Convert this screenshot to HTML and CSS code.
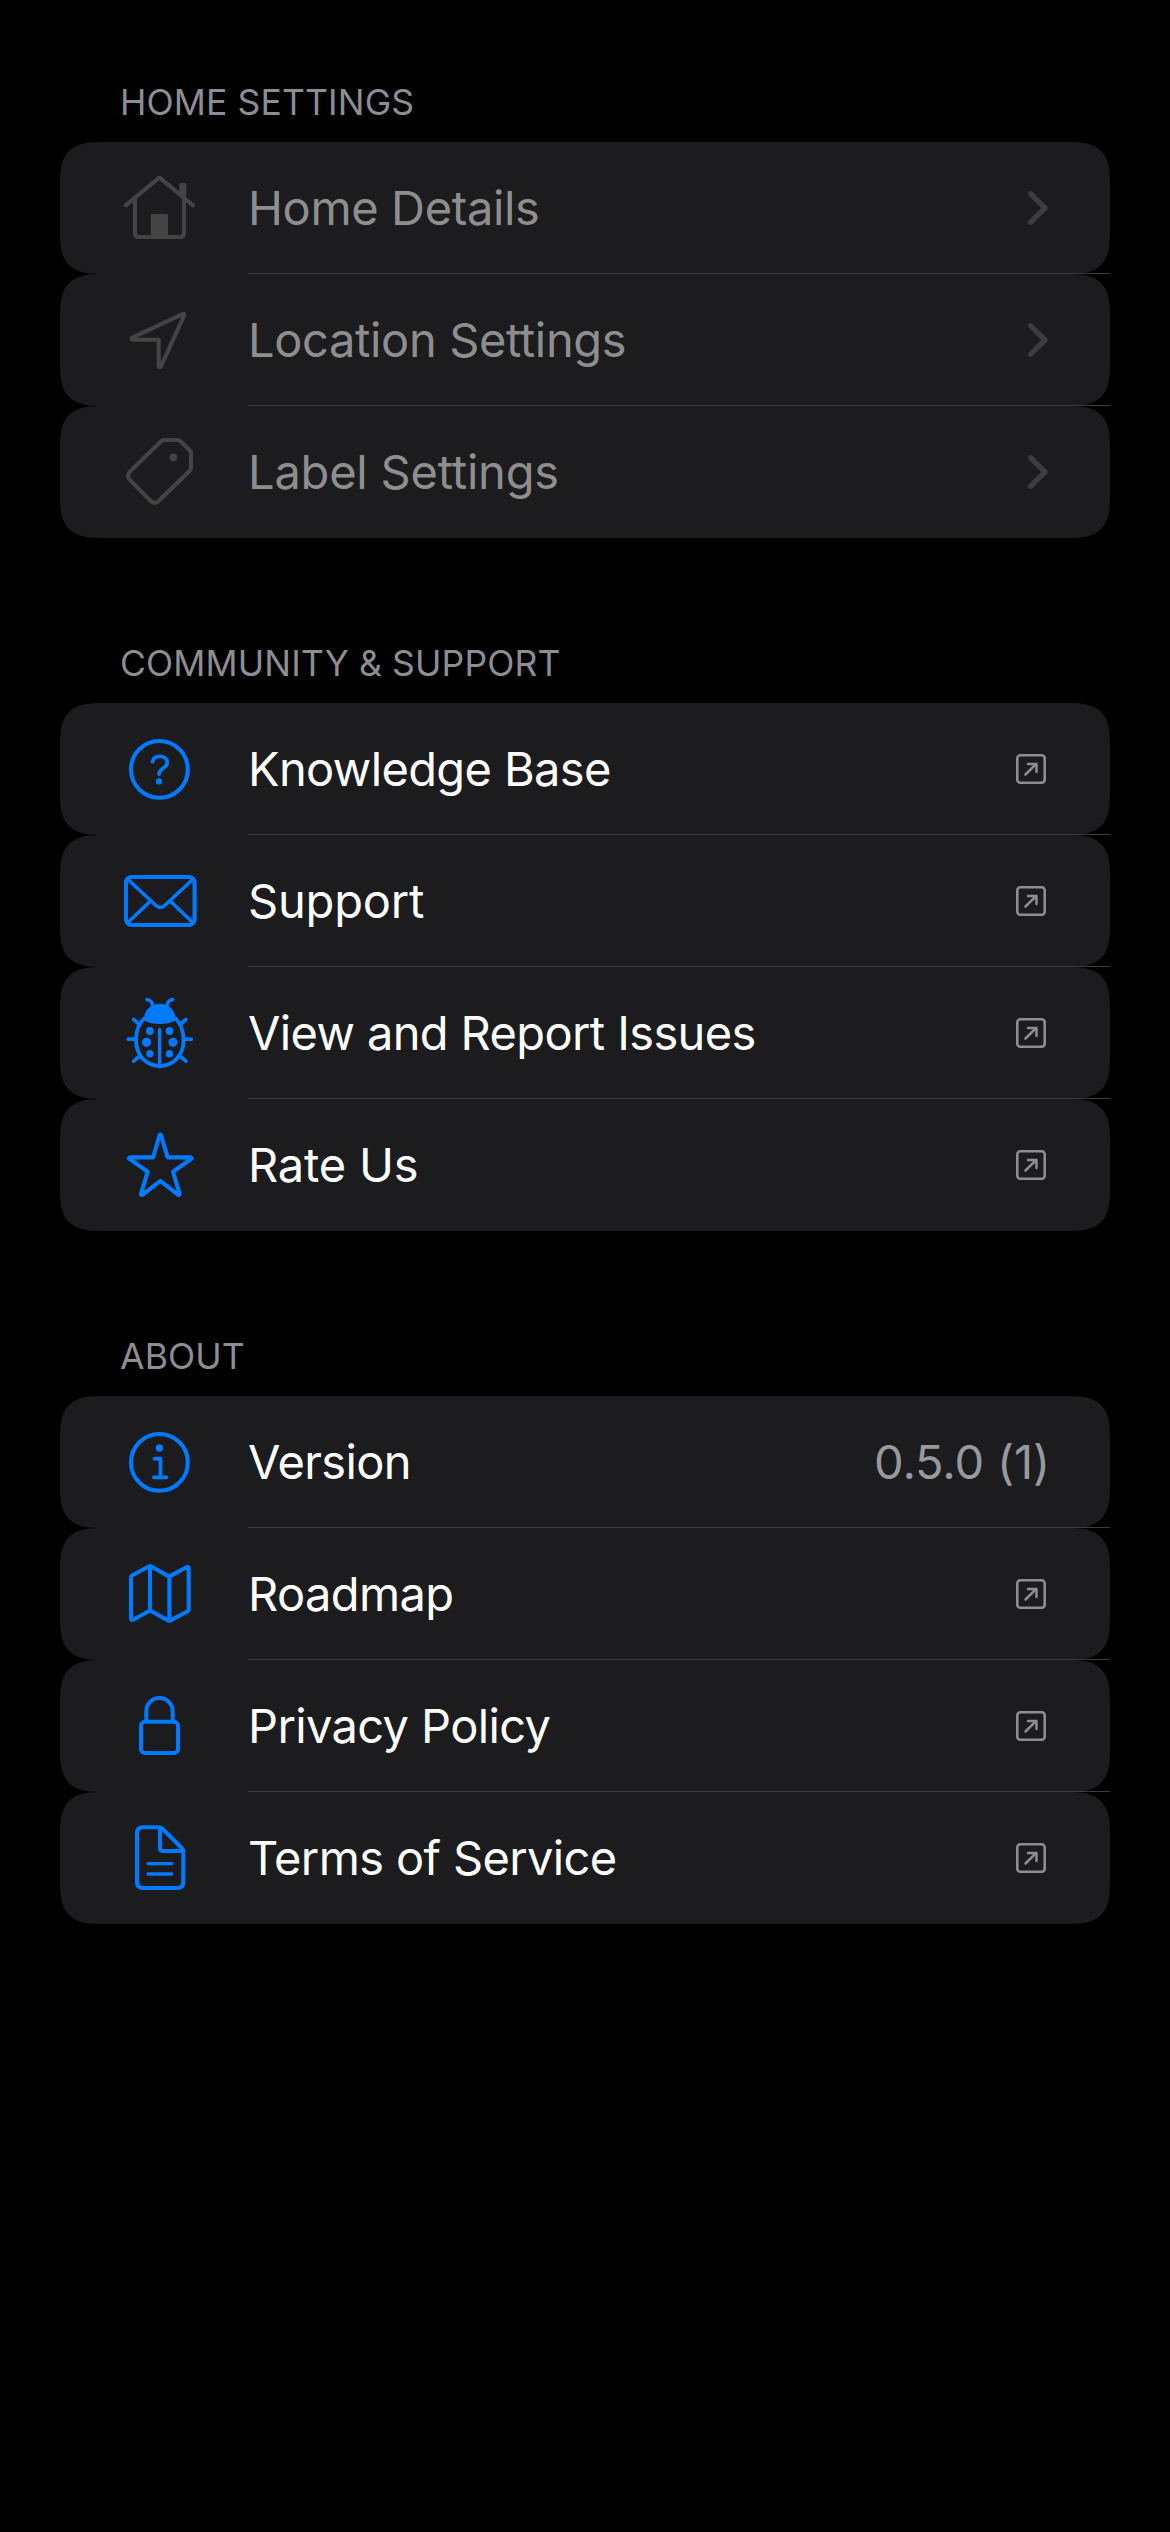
FILE: index.html
```html
<!DOCTYPE html>
<html lang="en">
<head>
<meta charset="utf-8">
<title>Settings</title>
<link rel="stylesheet" href="styles.css">
</head>
<body>
<svg class="defs" aria-hidden="true">
  <symbol id="chevron" viewBox="0 0 22 36"><path d="M4.700 3.800 19 18 4.700 32.200" stroke-width="5.400"/></symbol>
  <symbol id="external" viewBox="0 0 30 30"><rect x="1.300" y="1.300" width="27.400" height="27.400" rx="3" stroke-width="2.600"/><path d="M9.500 20.500 20.300 9.800M12 10h8.500v8" stroke-width="2.500"/></symbol>
</svg>
<main class="settings">
  <section class="section">
    <h2 class="section-title">HOME SETTINGS</h2>
    <ul class="list list-disabled">
      <li class="row">
        <svg class="icon" viewBox="0 0 100 132"><path d="M15.7 63.3 48 36.6q1.4-1.2 2.8 0L83 63.3M25 56v35q0 4 4 4h41q4 0 4-4V56"/><path class="solid" d="M40.7 97V73.2q0-1.2 1.2-1.2h14.9q1.2 0 1.2 1.2V97zM69.3 53V42.5q0-1.5 1.5-1.5h4q1.5 0 1.5 1.5V59z"/></svg>
        <span class="label">Home Details</span>
        <svg class="chevron"><use href="#chevron"/></svg>
      </li>
      <li class="row">
        <svg class="icon" viewBox="0 0 100 132"><path d="M22.2 63.6 72.6 40.1q2.6-1 1.6 1.6L50.8 92.6q-1.6 1.6-2.1-.6V65.7H22.6q-2-.8-.4-2.1z"/></svg>
        <span class="label">Location Settings</span>
        <svg class="chevron"><use href="#chevron"/></svg>
      </li>
      <li class="row">
        <svg class="icon" viewBox="0 0 100 132"><path d="M54 34h13.6q1.8 0 3 1.2l9.1 9.1q1.3 1.3 1.3 3v14.4q0 1.8-1.3 3L48.5 95.3q-3.8 3.2-7.6 0L19.6 73.6q-3.2-3.8 0-7.6L51 35.2q1.2-1.2 3-1.2z"/><circle class="solid" cx="63.4" cy="51.4" r="3.8"/></svg>
        <span class="label label-loose">Label Settings</span>
        <svg class="chevron"><use href="#chevron"/></svg>
      </li>
    </ul>
  </section>

  <section class="section">
    <h2 class="section-title">COMMUNITY &amp; SUPPORT</h2>
    <ul class="list">
      <li class="row">
        <svg class="icon" viewBox="0 0 100 132"><circle cx="49.4" cy="66.4" r="28.4"/><path d="M42.5 58.7c.6-3.6 3.2-5.4 7.3-5.4s7.5 2.4 7.5 6.1c0 5.600-8.200 6-8.200 11.600" stroke-width="3.8"/><circle class="solid" cx="49" cy="78.4" r="3.1"/></svg>
        <span class="label">Knowledge Base</span>
        <svg class="external"><use href="#external"/></svg>
      </li>
      <li class="row">
        <svg class="icon" viewBox="0 0 100 132"><rect x="16" y="42" width="68.6" height="48" rx="5.5"/><path d="m17.5 44 28.7 26.7q4.1 3.6 8.2 0L83.2 44M17.5 88l23.2-22.3M83.2 88 60 65.7" stroke-width="3.6"/></svg>
        <span class="label label-loose">Support</span>
        <svg class="external"><use href="#external"/></svg>
      </li>
      <li class="row">
        <svg class="icon" viewBox="0 0 100 132"><path d="M34 51.5c-5 5-8 13-8 21.5C26 88 36 99 49.8 99s23.8-11 23.8-26c0-8.500-3-16.500-8-21.500" stroke-width="3.8"/><path class="solid" d="M34 53.500C33.500 43 41 36.700 49.800 36.700S66 43 65.600 53.500C61 56 56 57 49.800 57S38.500 56 34 53.500z"/><path d="M37 32.500q5 1 5.500 5.500M62.600 32.500q-5 1-5.500 5.500M23.700 52.500l6 5.200M75.900 52.500l-6 5.200M18.300 72.200H26M81.300 72.200h-7.700M23.700 94.200l6-5.200M75.900 94.200l-6-5.200" stroke-width="3.700"/><path d="M49.600 62.500V97" stroke-width="3.400"/><g class="solid"><circle cx="39.900" cy="64" r="3.900"/><circle cx="36.500" cy="75.300" r="4.600"/><circle cx="39.900" cy="86.700" r="3.700"/><circle cx="59.500" cy="64" r="3.900"/><circle cx="63" cy="75.300" r="4.600"/><circle cx="59.500" cy="86.700" r="3.700"/></g></svg>
        <span class="label">View and Report Issues</span>
        <svg class="external"><use href="#external"/></svg>
      </li>
      <li class="row">
        <svg class="icon" viewBox="0 0 100 132"><path d="M49.500 36.200q.8-1.600 1.600 0L57.600 58.400H80.800q1.800.4.500 1.500L63 72.700 69.600 94.700q0 1.800-1.400 1.100L50.300 81.800 32.400 95.800q-1.400.7-1.400-1.100L37.800 72.700 19.400 59.900q-1.300-1.100.5-1.500H43.100z"/></svg>
        <span class="label label-loose">Rate Us</span>
        <svg class="external"><use href="#external"/></svg>
      </li>
    </ul>
  </section>

  <section class="section">
    <h2 class="section-title">ABOUT</h2>
    <ul class="list">
      <li class="row">
        <svg class="icon" viewBox="0 0 100 132"><circle cx="49.4" cy="66.4" r="28.4"/><circle class="solid" cx="49.400" cy="52" r="3.700"/><path d="M44.500 62.700h6v18.600M43.800 81.300h12.700" stroke-width="3.700"/></svg>
        <span class="label">Version</span>
        <span class="value">0.5.0 (1)</span>
      </li>
      <li class="row">
        <svg class="icon" viewBox="0 0 100 132"><path d="M22 47.500 38.700 38.500q1.300-.7 2.600 0L58 47.900q1.300.8 2.600 0L76.500 39.200q2.200-1 2.200 1.300V81.500q0 1.100-1 1.700L60.600 92.400q-1.300.8-2.600 0L41.300 83.300q-1.300-.7-2.600 0L23.200 91.700Q21 92.700 21 90.400V49.200q0-1.100 1-1.700zM40 38v45M59.400 48.500v44.500"/></svg>
        <span class="label">Roadmap</span>
        <svg class="external"><use href="#external"/></svg>
      </li>
      <li class="row">
        <svg class="icon" viewBox="0 0 100 132"><rect x="31" y="61.700" width="37" height="31.300" rx="4"/><path d="M36.300 61V51.200a13.200 13.200 0 0 1 26.400 0V61"/></svg>
        <span class="label">Privacy Policy</span>
        <svg class="external"><use href="#external"/></svg>
      </li>
      <li class="row">
        <svg class="icon" viewBox="0 0 100 132"><path d="M33 35.300H49q2 0 3.500 1.500L71.800 56q1.500 1.500 1.500 3.500V90q0 6-6 6H33q-6 0-6-6V41.300q0-6 6-6zM50 36V56q0 3 3 3H72.500"/><path d="M38 71.600H61.800M38 82H61.800" stroke-width="3.300"/></svg>
        <span class="label">Terms of Service</span>
        <svg class="external"><use href="#external"/></svg>
      </li>
    </ul>
  </section>
</main>
</body>
</html>
```
FILE: styles.css
```css
* {
  box-sizing: border-box;
}

body {
  margin: 0;
  min-height: 2532px;
  background: #000;
  color: #fff;
  font-family: Inter, "Liberation Sans", sans-serif;
}

.defs {
  display: none;
}

.settings {
  display: flex;
  flex-direction: column;
  gap: 85px;
  padding: 62px 60px 0;
}

.section-title {
  height: 80px;
  margin: 0;
  padding-left: 60px;
  color: #8d8d93;
  font-size: 35.5px;
  font-weight: 400;
  line-height: 82px;
  letter-spacing: 0.14px;
}

.list {
  margin: 0;
  padding: 0;
  list-style: none;
}

.row {
  position: relative;
  display: flex;
  align-items: center;
  height: 132px;
  padding: 0 64px 0 50px;
  border-radius: 30px;
  background: #1c1c1e;
}

@supports (corner-shape: superellipse(1.6)) {
  .row {
    border-radius: 44px;
    corner-shape: superellipse(1.6);
  }
}

/* Hairline over the seam between two rows, inset to the label */
.row:not(:last-child)::after {
  content: "";
  position: absolute;
  right: 0;
  bottom: 0;
  left: 188px;
  height: 1px;
  background: #3d3d41;
}

svg {
  fill: none;
  stroke: currentColor;
  stroke-linecap: round;
  stroke-linejoin: round;
}

.icon {
  flex: none;
  width: 100px;
  height: 132px;
  color: #007aff;
  stroke-width: 4.1;
}

.solid {
  fill: currentColor;
  stroke: none;
}

.label {
  flex: 1;
  padding-left: 38px;
  font-size: 47px;
  line-height: 60px;
  letter-spacing: -0.62px;
  white-space: nowrap;
}

.value {
  margin-right: -4px;
  color: #98989f;
  font-size: 47px;
  line-height: 60px;
  letter-spacing: -0.15px;
}

.external {
  width: 30px;
  height: 30px;
  color: #8e8e8e;
}

.chevron {
  width: 22px;
  height: 36px;
  margin-right: -2px;
  color: #3d3d3f;
}

.list-disabled .icon {
  color: #444;
}

.list-disabled .label {
  color: #8e8e8e;
  letter-spacing: -0.36px;
}

.list .label-loose {
  letter-spacing: -0.2px;
}
```
